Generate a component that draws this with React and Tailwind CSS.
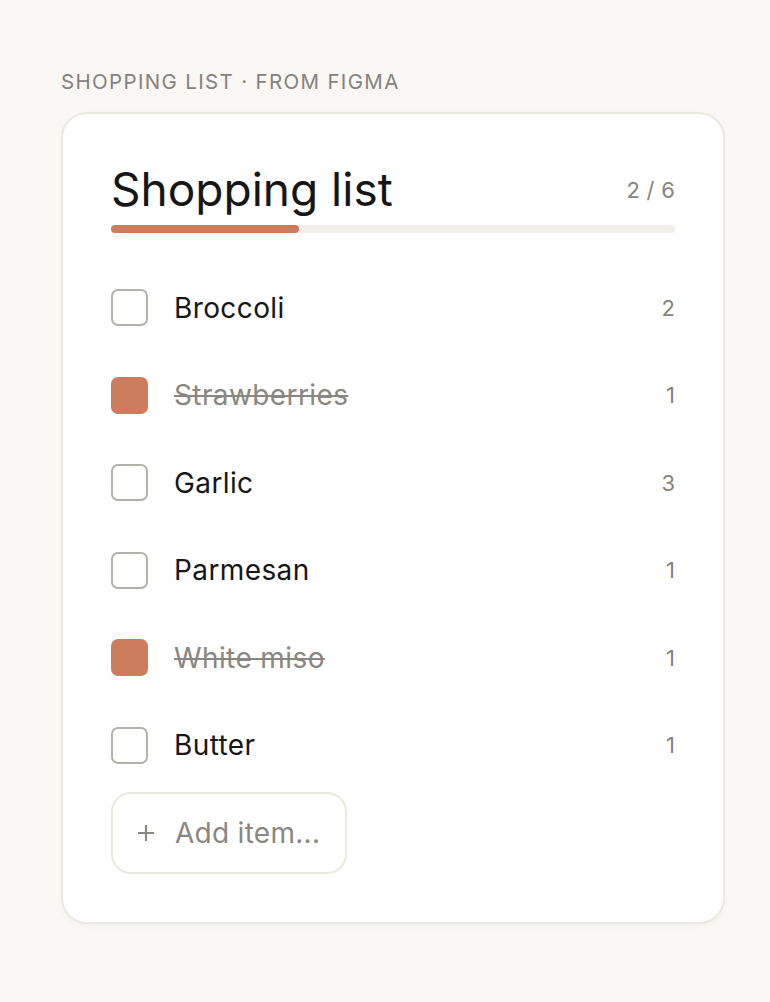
import React from "react";

const items = [
  { name: "Broccoli", qty: 2, done: false },
  { name: "Strawberries", qty: 1, done: true },
  { name: "Garlic", qty: 3, done: false },
  { name: "Parmesan", qty: 1, done: false },
  { name: "White miso", qty: 1, done: true },
  { name: "Butter", qty: 1, done: false },
];

export default function App() {
  const done = items.filter((i) => i.done).length;
  return (
    <div
      className="min-h-[1002px] w-full bg-[#f9f8f5] pl-[61px] pr-[44px] pt-[70px]"
      style={{ fontFamily: "Inter, 'Noto Sans', sans-serif" }}
    >
      <div className="text-[20.5px] leading-[24px] tracking-[0.065em] text-[#85827c] font-normal">
        SHOPPING LIST · FROM FIGMA
      </div>
      <div className="mt-[18px] w-[664px] rounded-[26px] border-2 border-[#ebe8e1] bg-white px-[48px] pt-[48px] pb-[48px] shadow-[0_2px_6px_rgba(0,0,0,0.03)]">
        <div className="flex items-end justify-between">
          <h1 className="text-[46px] leading-[54px] font-normal text-[#161616]">
            Shopping list
          </h1>
          <span className="mb-[12px] text-[22px] leading-[28px] text-[#86837d] tracking-[0.01em]">
            {done} / {items.length}
          </span>
        </div>
        <div className="mt-[9px] h-[8px] w-full rounded-full bg-[#f2efea]">
          <div
            className="h-full rounded-full bg-[#cd7c5e]"
            style={{ width: `${(done / items.length) * 100}%` }}
          />
        </div>
        <div className="mt-[31px] flex flex-col">
          {items.map((it) => (
            <div key={it.name} className="flex h-[87.5px] items-center">
              {it.done ? (
                <div className="h-[37px] w-[37px] shrink-0 rounded-[7px] bg-[#cd7c5e]" />
              ) : (
                <div className="h-[37px] w-[37px] shrink-0 rounded-[7px] border-[2.5px] border-[#b5b2ab] bg-white" />
              )}
              <span
                className={
                  "ml-[26px] flex-1 text-[28px] leading-[32px] tracking-[0.014em] " +
                  (it.done
                    ? "text-[#8a8781] line-through decoration-[#8a8781] decoration-2"
                    : "text-[#161616]")
                }
              >
                {it.name}
              </span>
              <span className="text-[22px] leading-[28px] text-[#86837d]">{it.qty}</span>
            </div>
          ))}
        </div>
        <button className="mt-[3px] flex h-[82px] w-[236px] items-center rounded-[20px] border-2 border-[#ebe8df] bg-white pl-[25px] text-[28px] text-[#8a8781]">
          <svg width="16" height="16" viewBox="0 0 16 16" className="shrink-0">
            <path d="M8 0V16M0 8H16" stroke="#8a8781" strokeWidth="2.2" />
          </svg>
          <span className="ml-[21px] tracking-[0.01em]">Add item...</span>
        </button>
      </div>
    </div>
  );
}
